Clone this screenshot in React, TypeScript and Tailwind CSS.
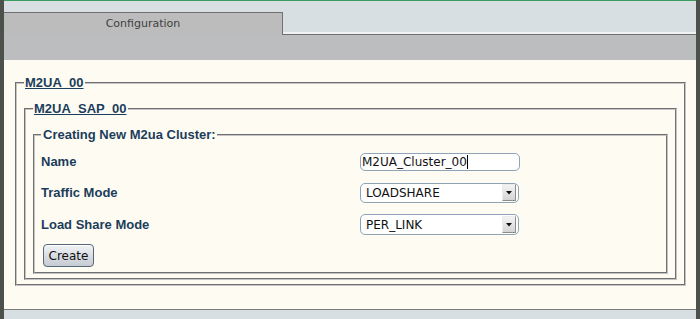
import React from "react";

const labelCls =
  "w-[319px] shrink-0 text-[13px] font-bold text-[#1c3d5c] [font-family:'Liberation_Sans',Arial,sans-serif]";

function Arrow() {
  return (
    <div className="w-[14px] h-[17px] mr-[2px] shrink-0 flex items-center justify-center bg-gradient-to-b from-[#f4f4f4] to-[#d4d4d4] border-r border-b border-[#8c8c8c] border-l border-t border-l-[#ececec] border-t-[#ececec]">
      <svg width="6" height="4" viewBox="0 0 6 4">
        <path d="M0 0 L6 0 L3 3.5 Z" fill="#111" />
      </svg>
    </div>
  );
}

function SelectBox({ value, h }: { value: string; h: string }) {
  return (
    <div
      className={`w-[159px] ${h} border border-[#8fa3b7] rounded-[5px] bg-white flex items-center pl-[5px] text-[12px] text-[#111] [font-family:'DejaVu_Sans',sans-serif]`}
    >
      <span className="flex-1 leading-none">{value}</span>
      <Arrow />
    </div>
  );
}

export default function App() {
  return (
    <div className="w-[700px] h-[319px] flex bg-[#4c514c] overflow-hidden">
      <div className="w-[4px] shrink-0 bg-[#4c514c]" />
      <div className="flex-1 flex flex-col">
        <div className="h-px bg-[#3b9d5e]" />
        <div className="h-[34px] flex">
          <div className="w-[279px] flex flex-col">
            <div className="h-[11px] bg-[#d8dfe2]" />
            <div className="flex-1 bg-[#bcbcbc] border-t border-r border-[#707070] flex justify-center pt-[4px] text-[11px] leading-[13px] text-[#404040] [font-family:'DejaVu_Sans',sans-serif]">
              Configuration
            </div>
          </div>
          <div className="flex-1 bg-[#d8dfe2] border-b border-[#707070] shadow-[inset_0_-2px_0_#eef2f3]" />
        </div>
        <div className="h-[25px] bg-[#bcbdbe]" />
        <div className="flex-1 bg-[#fefcf2] pt-[15px] pl-[11px] pr-[10px]">
          <fieldset className="border-2 [border-style:groove] border-[#c4c4c4] pl-[7px] pr-[7px] pt-[11px] pb-[4px]">
            <legend className="px-[1px] leading-[15px] text-[13px] font-bold text-[#1c3d5c] underline [font-family:'Liberation_Sans',Arial,sans-serif]">
              M2UA_00
            </legend>
            <fieldset className="border-2 [border-style:groove] border-[#c4c4c4] pl-[7px] pr-[7px] pt-[11px] pb-[4px]">
              <legend className="px-[1px] leading-[15px] text-[13px] font-bold text-[#1c3d5c] underline [font-family:'Liberation_Sans',Arial,sans-serif]">
                M2UA_SAP_00
              </legend>
              <fieldset className="border-2 [border-style:groove] border-[#c4c4c4] pl-[6px] pr-[6px] pt-[4px] pb-[5px]">
                <legend className="pl-[2px] pr-[1px] leading-[15px] text-[13px] font-bold text-[#1c3d5c] [font-family:'Liberation_Sans',Arial,sans-serif]">
                  Creating New M2ua Cluster:
                </legend>
                <div className="h-[31px] flex items-center">
                  <div className={labelCls}>Name</div>
                  <div className="w-[160px] h-[18px] border border-[#8fa3b7] rounded-[5px] bg-white flex items-center pl-[1px] text-[12px] text-[#111] [font-family:'DejaVu_Sans',sans-serif]">
                    <span className="leading-none">M2UA_Cluster_00</span>
                    <span className="inline-block w-px h-[14px] bg-black" />
                  </div>
                </div>
                <div className="h-[31px] flex items-center">
                  <div className={labelCls}>Traffic Mode</div>
                  <SelectBox value="LOADSHARE" h="h-[20px]" />
                </div>
                <div className="h-[33px] flex items-center">
                  <div className={labelCls}>Load Share Mode</div>
                  <SelectBox value="PER_LINK" h="h-[21px]" />
                </div>
                <div className="mt-[3px] ml-[2px] w-[51px] h-[23px] border border-[#56677a] rounded-[4px] bg-gradient-to-b from-[#f0f2f5] to-[#c6cbd2] flex items-center justify-center text-[12px] text-[#111] [font-family:'DejaVu_Sans',sans-serif] shadow-[inset_0_1px_0_#ffffff]">
                  Create
                </div>
              </fieldset>
            </fieldset>
          </fieldset>
        </div>
        <div className="h-[10px] border-t border-[#7a7a7a] bg-[#d8dfe2]" />
      </div>
      <div className="w-[4px] shrink-0 bg-[#4c514c]" />
    </div>
  );
}
